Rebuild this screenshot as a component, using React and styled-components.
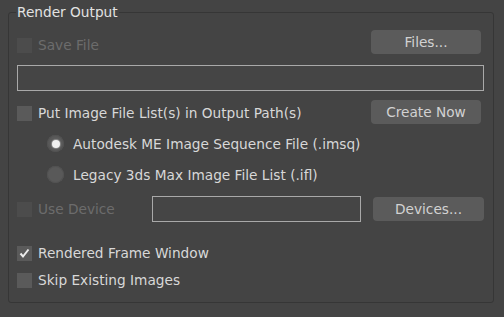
import React from "react";
import styled, { createGlobalStyle } from "styled-components";

const Global = createGlobalStyle`
  html, body { margin: 0; padding: 0; background: #444444; }
  body { font-family: "DejaVu Sans", "Noto Sans", sans-serif; font-size: 13.7px; color: #d6d6d6; }
`;

const Page = styled.div`
  width: 504px;
  height: 317px;
  box-sizing: border-box;
  padding: 4px 10px 0 8px;
  background: #444444;
`;

const Group = styled.fieldset`
  margin: 0;
  min-width: 0;
  border: 1px solid #363636;
  border-radius: 3px;
  padding: 10px 9px 14px 8px;
  display: flex;
  flex-direction: column;
`;

const Title = styled.legend`
  padding: 0 1px;
  margin-left: -1px;
  line-height: 16px;
  color: #e2e2e2;
`;

const Row = styled.div`
  display: flex;
  align-items: center;
  height: ${(p) => p.$h}px;
  margin-top: ${(p) => p.$top || 0}px;
  padding-left: ${(p) => p.$indent || 0}px;
`;

const Item = styled.label`
  display: flex;
  align-items: center;
  gap: 6px;
  line-height: 15px;
  color: ${(p) => (p.$disabled ? "#6c6c6c" : "#d8d8d8")};
  align-self: ${(p) => (p.$bottom !== undefined ? "flex-end" : "center")};
  margin-bottom: ${(p) => p.$bottom || 0}px;
`;

const Box = styled.span`
  width: 15px;
  height: 15px;
  flex: none;
  background: ${(p) => (p.$disabled ? "#4c4c4c" : "#5a5a5a")};
  display: flex;
  align-items: center;
  justify-content: center;
`;

const Radio = styled.span`
  width: 17px;
  height: 17px;
  flex: none;
  border-radius: 50%;
  background: #595959;
  box-shadow: inset 0 0 0 1px #525252;
  display: flex;
  align-items: center;
  justify-content: center;
  &::after {
    content: "";
    display: ${(p) => (p.$on ? "block" : "none")};
    width: 8px;
    height: 8px;
    border-radius: 50%;
    background: #f0f0f0;
    box-shadow: 0 0 1px 1px rgba(200, 200, 200, 0.45);
  }
`;

const RadioItem = styled.label`
  display: flex;
  align-items: center;
  gap: 9px;
  color: #d8d8d8;
  line-height: 16px;
`;

const Button = styled.button`
  margin-left: ${(p) => (p.$flush ? "0" : "auto")};
  margin-right: ${(p) => p.$right || 0}px;
  width: ${(p) => p.$w}px;
  height: 24px;
  border: none;
  border-radius: 4px;
  background: #5b5b5b;
  color: #d2d2d2;
  font: inherit;
  padding: 0;
  cursor: default;
`;

const Field = styled.div`
  box-sizing: border-box;
  height: 26px;
  width: ${(p) => (p.$w ? `${p.$w}px` : "100%")};
  margin-left: ${(p) => (p.$w ? "auto" : "0")};
  margin-right: ${(p) => p.$right || 0}px;
  border: 1px solid #a9a9a9;
  background: #454545;
`;

const Check = () => (
  <svg width="11" height="11" viewBox="0 0 11 11">
    <polyline points="1.5,5.5 4,8.5 9.5,1.5" fill="none" stroke="#ececec" strokeWidth="2" />
  </svg>
);

export default function App() {
  return (
    <>
      <Global />
      <Page>
        <Group>
          <Title>Render Output</Title>
          <Row $h={24}>
            <Item $disabled $bottom={1}>
              <Box $disabled />
              Save File
            </Item>
            <Button $w={110} $right={3}>Files...</Button>
          </Row>
          <Row $h={26} $top={11}>
            <Field />
          </Row>
          <Row $h={24} $top={9}>
            <Item $bottom={3}>
              <Box />
              Put Image File List(s) in Output Path(s)
            </Item>
            <Button $w={110} $right={3}>Create Now</Button>
          </Row>
          <Row $h={17} $top={11} $indent={30}>
            <RadioItem>
              <Radio $on />
              Autodesk ME Image Sequence File (.imsq)
            </RadioItem>
          </Row>
          <Row $h={17} $top={14} $indent={30}>
            <RadioItem>
              <Radio />
              Legacy 3ds Max Image File List (.ifl)
            </RadioItem>
          </Row>
          <Row $h={26} $top={13}>
            <Item $disabled>
              <Box $disabled />
              Use Device
            </Item>
            <Field $w={209} $right={12} />
            <Button $w={111} $flush>Devices...</Button>
          </Row>
          <Row $h={15} $top={24}>
            <Item>
              <Box>
                <Check />
              </Box>
              Rendered Frame Window
            </Item>
          </Row>
          <Row $h={15} $top={12}>
            <Item>
              <Box />
              Skip Existing Images
            </Item>
          </Row>
        </Group>
      </Page>
    </>
  );
}
